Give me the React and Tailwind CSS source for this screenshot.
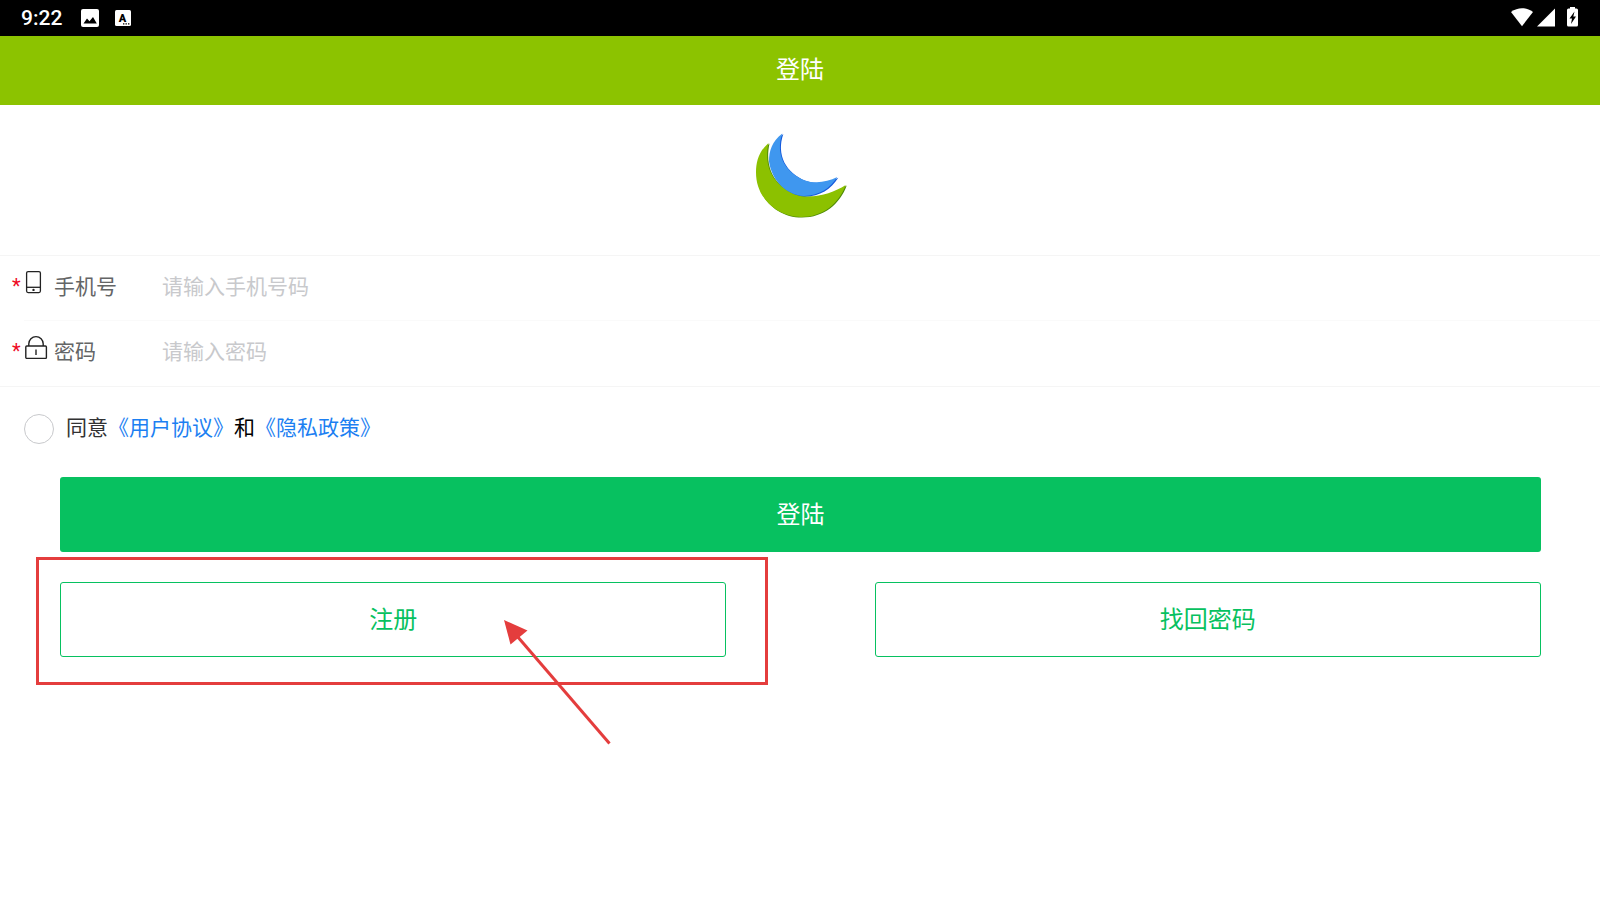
// Login screen: status bar, title bar, phone/password form and account actions
import { useState } from 'react'

const GREEN_MOON = 'M29.5 23.5 C20 32 17 42 17 53 C17 78 37 97.5 62 97.5 C84 97.5 100 84 106.7 65.5 C95 73 80 78 65 76.7 C41 72 23 54 29.5 23.5 Z'
const BLUE_MOON = 'M43.3 14 C33 22 30 31 30 42 C33 62 48 75.5 65 76.5 C80 76.5 91 69 98.3 57.7 C88 63 76 64.5 66 61 C46 53 36 35 43.3 14 Z'

// each moon is a dark shape with a lighter copy shifted up-left, which leaves a shaded edge
function CrescentLogo() {
  return (
    <svg className="w-[120px] h-[110px]" viewBox="0 0 120 110" role="img" aria-label="logo">
      <path d={GREEN_MOON} fill="#4f8a08"/>
      <path d={GREEN_MOON} fill="#8cc100" transform="translate(-1 -0.6)"/>
      <path d={BLUE_MOON} fill="#1459dc"/>
      <path d={BLUE_MOON} fill="#3f97ef" transform="translate(-1 -0.6)"/>
    </svg>
  )
}

function PhoneIcon() {
  return (
    <svg className="w-6 h-6" viewBox="0 0 24 24" fill="none" stroke="#222" strokeWidth="1.3">
      <rect x="2.6" y="1.6" width="13.8" height="21" rx="1.5"/>
      <path d="M2.6 17.3 H16.4"/>
      <circle cx="9.5" cy="19.9" r="1.2" fill="#222" stroke="none"/>
    </svg>
  )
}

function LockIcon() {
  return (
    <svg className="w-6 h-6" viewBox="0 0 24 24" fill="none" stroke="#222" strokeWidth="1.4">
      <rect x="1.8" y="11" width="20.6" height="12.4" rx="1"/>
      <path d="M4.8 11 V8.8 A7.2 7.2 0 0 1 19.2 8.8 V11"/>
      <path d="M12 14.5 V20"/>
    </svg>
  )
}

function StatusBar() {
  return (
    <div className="bg-black h-9 px-[21px] flex items-center justify-between text-white">
      <div className="flex items-center">
        <span className="font-[Roboto,sans-serif] font-medium text-[21px] leading-9">9:22</span>
        <svg className="w-[18px] h-[18px] ml-[19px]" viewBox="0 0 18 18">
          <rect width="18" height="18" rx="2" fill="#fff"/>
          <path d="M2.5 14.5 L6 9.5 L8.5 12.3 L12 8 L15.8 14.5 Z" fill="#000"/>
        </svg>
        <svg className="w-4 h-4 ml-4" viewBox="0 0 16 16">
          <rect width="16" height="16" rx="1.5" fill="#fff"/>
          <text x="7.5" y="11.5" textAnchor="middle" fontFamily="Roboto, sans-serif" fontWeight="900" fontSize="11">A</text>
          <path d="M8 13.2 h1.4 v1.4 h-1.4z M10.5 13.2 h1.4 v1.4 h-1.4z M13 13.2 h1.4 v1.4 h-1.4z" fill="#000"/>
        </svg>
      </div>
      <div className="flex items-center pb-0.5">
        <svg className="w-[23px] h-5" viewBox="0 0 23 20" fill="#fff">
          <path d="M0 5 C7 0 15 0 22 5 L11 19.2 Z"/>
        </svg>
        <svg className="w-[18px] h-5 ml-[3px]" viewBox="0 0 18 20" fill="#fff">
          <path d="M18 1.5 V19.5 H0 Z"/>
        </svg>
        <svg className="w-3 h-5 ml-3" viewBox="0 0 12 20">
          <path d="M3 0 H8 V1.5 H9.5 Q11 1.5 11 3 V18 Q11 19.5 9.5 19.5 H1.5 Q0 19.5 0 18 V3 Q0 1.5 1.5 1.5 H3 Z" fill="#fff"/>
          <path d="M7.5 4.5 L2.5 11.5 H5 L4 17 L9 9.5 H6.3 Z" fill="#000"/>
        </svg>
      </div>
    </div>
  )
}

function Field({ id, type, label, placeholder, icon, divider }) {
  return (
    <div className="flex h-[65px] pl-3">
      <span className="w-3 text-[20px] leading-[61px] text-[#ee0a24] font-[Roboto,sans-serif]">*</span>
      <div className={`flex flex-1 ${divider ? 'border-b border-[#fafafa]' : ''}`}>
        <label htmlFor={id} className="flex w-[138px] text-[21px] leading-[59px] text-[#646566]">
          <span className="w-[30px] pt-3.5">{icon}</span>
          {label}
        </label>
        <input
          id={id}
          type={type}
          placeholder={placeholder}
          className="flex-1 h-[58px] text-[21px] text-[#323233] placeholder:text-[#c8c9cc] outline-none"
        />
      </div>
    </div>
  )
}

const OUTLINE_BTN = 'w-full h-[75px] pb-1 rounded-[3px] border border-[#07c160] text-2xl text-[#07c160]'

export default function App() {
  const [agree, setAgree] = useState(false)

  return (
    <div className="min-h-screen bg-white overflow-x-hidden font-['Noto_Sans_CJK_SC',sans-serif]">
      <StatusBar/>
      <header className="bg-[#8cc300] h-[69px] pb-1.5 flex items-center justify-center">
        <h1 className="text-2xl text-white">登陆</h1>
      </header>

      <form onSubmit={(e) => e.preventDefault()}>
        <div className="h-[150px] pt-[15px] flex justify-center">
          <CrescentLogo/>
        </div>

        <div className="border-y border-[#f5f5f5]">
          <Field id="phone" type="tel" label="手机号" placeholder="请输入手机号码" icon={<PhoneIcon/>} divider/>
          <Field id="password" type="password" label="密码" placeholder="请输入密码" icon={<LockIcon/>}/>
        </div>

        {/* Agreement */}
        <div className="flex items-center h-[84px] pl-6">
          <input
            id="agree"
            type="checkbox"
            checked={agree}
            onChange={(e) => setAgree(e.target.checked)}
            className="appearance-none w-[30px] h-[30px] rounded-full border border-[#c8c9cc] checked:bg-[#07c160] checked:border-[#07c160]"
          />
          <p className="pl-3 pb-1 text-[21px] text-black">
            <label htmlFor="agree" className="text-[#323233]">同意</label>
            <a href="#agreement" className="text-[#1c7ff2]">《用户协议》</a>
            和
            <a href="#privacy" className="text-[#1c7ff2]">《隐私政策》</a>
          </p>
        </div>

        <div className="pl-[60px] pr-[59px] pt-1.5">
          <button type="submit" className="w-full h-[75px] pb-1 rounded-[3px] bg-[#07c160] text-2xl text-white">登陆</button>
          <div className="flex justify-between pt-[30px]">
            <div className="relative w-[45%]">
              <button type="button" className={OUTLINE_BTN}>注册</button>
              {/* Callout over the register button */}
              <div className="absolute -left-6 -right-[42px] -top-[25px] -bottom-7 border-3 border-[#e43d3d] pointer-events-none"/>
              <svg className="absolute right-[114px] top-[38px] w-[108px] h-[126px] pointer-events-none" viewBox="0 0 108 126">
                <path d="M13 16 L105.5 123.5" stroke="#e43d3d" strokeWidth="3"/>
                <path d="M0 0 L23.5 10.5 L6.5 24.5 Z" fill="#e43d3d"/>
              </svg>
            </div>
            <div className="w-[45%]">
              <button type="button" className={OUTLINE_BTN}>找回密码</button>
            </div>
          </div>
        </div>
      </form>
    </div>
  )
}
